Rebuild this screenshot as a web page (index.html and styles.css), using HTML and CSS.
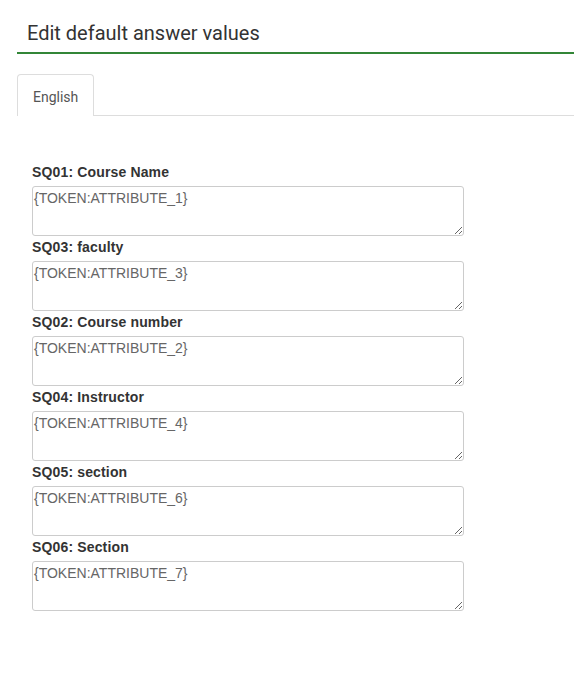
FILE: index.html
```html
<!DOCTYPE html>
<html>
<head>
<meta charset="utf-8">
<link rel="stylesheet" href="styles.css">
</head>
<body>
<div class="page">
  <div class="header"><h3 class="title">Edit default answer values</h3></div>
  <ul class="tabs">
    <li class="tab active">English</li>
  </ul>
  <div class="tab-content">
    <div class="field">
      <label class="label">SQ01: Course Name</label>
      <textarea class="input">{TOKEN:ATTRIBUTE_1}</textarea>
    </div>
    <div class="field">
      <label class="label">SQ03: faculty</label>
      <textarea class="input">{TOKEN:ATTRIBUTE_3}</textarea>
    </div>
    <div class="field">
      <label class="label">SQ02: Course number</label>
      <textarea class="input">{TOKEN:ATTRIBUTE_2}</textarea>
    </div>
    <div class="field">
      <label class="label">SQ04: Instructor</label>
      <textarea class="input">{TOKEN:ATTRIBUTE_4}</textarea>
    </div>
    <div class="field">
      <label class="label">SQ05: section</label>
      <textarea class="input">{TOKEN:ATTRIBUTE_6}</textarea>
    </div>
    <div class="field">
      <label class="label">SQ06: Section</label>
      <textarea class="input">{TOKEN:ATTRIBUTE_7}</textarea>
    </div>
  </div>
</div>
</body>
</html>
```
FILE: styles.css
```css
html, body {
  margin: 0;
  padding: 0;
  background: #fff;
}
body {
  font-family: Roboto, "Liberation Sans", Arial, sans-serif;
  color: #333;
}
.page {
  padding-left: 17px;
}
.header {
  border-bottom: 2px solid #328637;
  padding: 20px 10px 6px;
}
.title {
  margin: 0;
  font-size: 20px;
  font-weight: 400;
  line-height: 26px;
  color: #333;
}
.tabs {
  list-style: none;
  margin: 20px 0 0;
  padding: 0;
  display: flex;
  border-bottom: 1px solid #ddd;
}
.tab {
  font-size: 14px;
  color: #555;
  padding: 0 15px;
  height: 40px;
  line-height: 44px;
  border: 1px solid #ddd;
  border-bottom: none;
  border-radius: 4px 4px 0 0;
  margin-bottom: -1px;
  background: #fff;
  padding-bottom: 1px;
}
.tab-content {
  padding: 48px 0 0 15px;
}
.field {
  display: flex;
  flex-direction: column;
  align-items: flex-start;
}
.label {
  font-family: "Liberation Sans", Arial, sans-serif;
  font-size: 14px;
  font-weight: 700;
  letter-spacing: 0.15px;
  line-height: 20px;
  margin-top: -2px;
  margin-bottom: 4px;
  color: #333;
}
.input {
  display: block;
  box-sizing: border-box;
  width: 432px;
  height: 50px;
  margin: 0 0 3px;
  padding: 3px 1px;
  border: 1px solid #ccc;
  border-radius: 3px;
  font-family: "Liberation Sans", Arial, sans-serif;
  font-size: 14px;
  line-height: 16px;
  color: #666;
  background: #fff;
  resize: vertical;
}
```
